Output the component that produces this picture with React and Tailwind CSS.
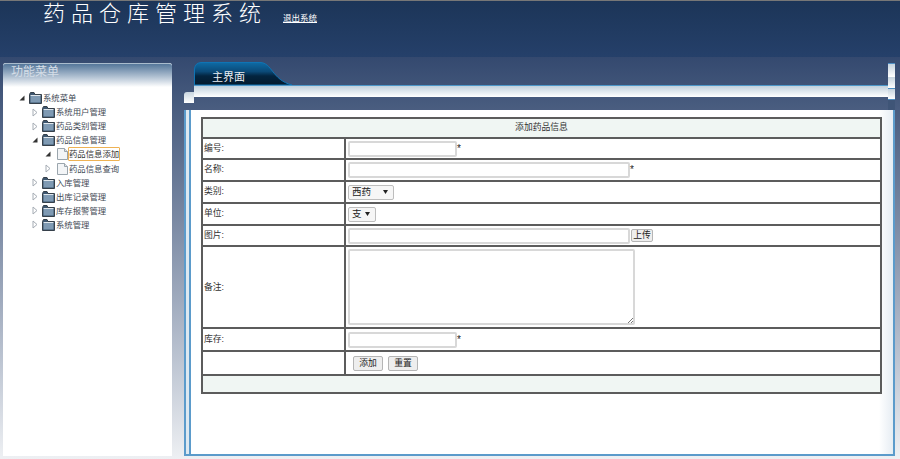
const FONT = 'font-["Liberation_Sans","Noto_Sans_CJK_SC",sans-serif]';

const TREE = [
  { label: '系统菜单', depth: 0, open: true, folder: true },
  { label: '系统用户管理', depth: 1, folder: true },
  { label: '药品类别管理', depth: 1, folder: true },
  { label: '药品信息管理', depth: 1, open: true, folder: true },
  { label: '药品信息添加', depth: 2, open: true, active: true },
  { label: '药品信息查询', depth: 2 },
  { label: '入库管理', depth: 1, folder: true },
  { label: '出库记录管理', depth: 1, folder: true },
  { label: '库存报警管理', depth: 1, folder: true },
  { label: '系统管理', depth: 1, folder: true },
];

function Arrow({ open }) {
  return open ? (
    <svg width="6" height="6" viewBox="0 0 6 6" className="shrink-0">
      <path d="M5.5.5V5.5H.5Z" fill="#333" />
    </svg>
  ) : (
    <svg width="6" height="9" viewBox="0 0 6 9" className="shrink-0">
      <path d="M1 1 5 4.5 1 8Z" fill="#fff" stroke="#a5acb4" />
    </svg>
  );
}

function Folder() {
  return (
    <svg width="13" height="12" viewBox="0 0 13 12" className="shrink-0">
      <path d="M.5 2.5V11.5H12.5V2.5H6L5 .5H1.5Z" fill="#3d566f" stroke="#36404a" />
      <rect x="1.5" y="4" width="10" height="6.5" fill="#7f9ab3" />
      <rect x="1.5" y="3" width="10" height="1" fill="#dfe6ec" />
    </svg>
  );
}

function Page() {
  return (
    <svg width="11" height="12" viewBox="0 0 11 12" className="ml-[2px] shrink-0">
      <path d="M.5.5H7.5L10.5 3.5V11.5H.5Z" fill="#f3f5f7" stroke="#9aa5ad" />
      <path d="M7.5 .5V3.5H10.5" fill="#dfe4e8" stroke="#9aa5ad" />
    </svg>
  );
}

function TreeRow({ item }) {
  const pad = { 0: 'pl-[16px]', 1: 'pl-[29px]', 2: 'pl-[42px]' }[item.depth];
  return (
    <div className={`flex h-[14.1px] items-center ${pad}`}>
      <span className="flex w-[10px] shrink-0 items-center">
        <Arrow open={item.open} />
      </span>
      {item.folder ? <Folder /> : <Page />}
      <span
        className={`whitespace-nowrap text-[8.4px] leading-[12px] text-[#3f4a55] ${
          item.active ? 'rounded-[1px] border border-[#eeb254] text-[#333]' : 'border border-transparent'
        }`}
      >
        {item.label}
      </span>
    </div>
  );
}

function Sidebar() {
  return (
    <div className="ml-[3px] mt-[6px] flex h-[393px] w-[169px] shrink-0 flex-col rounded-t-[3px] bg-white">
      <div className="h-[24px] rounded-t-[3px] border-t border-[#a9bccd] bg-gradient-to-b from-[#55779a] to-white pl-[8px] text-[12px] leading-[17px] text-[#d5dee7]">
        功能菜单
      </div>
      <div className="pt-[4px]">
        {TREE.map(item => (
          <TreeRow key={item.label} item={item} />
        ))}
      </div>
    </div>
  );
}

const inputCls = 'block h-[16px] rounded-[2px] border-2 border-[#d8d8d8] bg-white';
const labelCls = 'border-2 border-[#5c5c5c] pl-[1px] text-[8.8px] text-[#333]';
const valueCls = 'border-2 border-[#5c5c5c] pl-[2px] text-[8.8px] text-[#333]';

function Star() {
  return <span className="text-[10px] leading-[16px] text-[#222]">*</span>;
}

function FakeSelect({ label, width }) {
  return (
    <div className={`flex h-[15px] items-center justify-between rounded-[2px] border border-[#bdbdbd] bg-[#f6f6f6] pl-[3px] pr-[5px] text-[9.5px] leading-none text-[#222] ${width}`}>
      <span>{label}</span>
      <svg width="5" height="4" viewBox="0 0 5 4">
        <path d="M0 0H5L2.5 4Z" fill="#222" />
      </svg>
    </div>
  );
}

function Btn({ children, cls }) {
  return (
    <button className={`rounded-[2px] border border-[#b5b5b5] bg-[#eeeeee] text-[8.8px] leading-none text-[#222] ${cls}`}>
      {children}
    </button>
  );
}

function FormTable() {
  return (
    <table className="w-[681px] table-fixed border-collapse">
      <colgroup>
        <col className="w-[143px]" />
        <col />
      </colgroup>
      <tbody>
        <tr className="h-[20px]">
          <td colSpan={2} className="border-2 border-[#5c5c5c] bg-[#f0f6f3] text-center text-[8.8px] text-[#333]">添加药品信息</td>
        </tr>
        <tr className="h-[21px]">
          <td className={labelCls}>编号:</td>
          <td className={valueCls}><div className="flex"><div className={`${inputCls} w-[109px]`} /><Star /></div></td>
        </tr>
        <tr className="h-[22px]">
          <td className={labelCls}>名称:</td>
          <td className={valueCls}><div className="flex"><div className={`${inputCls} w-[282px]`} /><Star /></div></td>
        </tr>
        <tr className="h-[22px]">
          <td className={labelCls}>类别:</td>
          <td className={valueCls}><FakeSelect label="西药" width="w-[46px]" /></td>
        </tr>
        <tr className="h-[22px]">
          <td className={labelCls}>单位:</td>
          <td className={valueCls}><FakeSelect label="支" width="w-[28px]" /></td>
        </tr>
        <tr className="h-[21px]">
          <td className={labelCls}>图片:</td>
          <td className={valueCls}>
            <div className="flex items-center">
              <div className={`${inputCls} w-[282px]`} />
              <Btn cls="ml-[1px] h-[13px] w-[22px]">上传</Btn>
            </div>
          </td>
        </tr>
        <tr className="h-[82px]">
          <td className={labelCls}><span className="relative top-[1px]">备注:</span></td>
          <td className={valueCls}>
            <div className="relative h-[76px] w-[287px] rounded-[2px] border-2 border-[#d8d8d8] bg-white">
              <svg width="6" height="6" viewBox="0 0 6 6" className="absolute bottom-0 right-0">
                <path d="M1 6 6 1M4 6 6 4" stroke="#777" />
              </svg>
            </div>
          </td>
        </tr>
        <tr className="h-[23px]">
          <td className={labelCls}>库存:</td>
          <td className={valueCls}><div className="flex"><div className={`${inputCls} w-[109px]`} /><Star /></div></td>
        </tr>
        <tr className="h-[24px]">
          <td className={labelCls} />
          <td className={valueCls}>
            <div className="flex gap-[5px] pl-[5px]">
              <Btn cls="h-[15px] w-[30px]">添加</Btn>
              <Btn cls="h-[15px] w-[30px]">重置</Btn>
            </div>
          </td>
        </tr>
        <tr className="h-[18px]">
          <td colSpan={2} className="border-2 border-[#5c5c5c] bg-[#f0f6f3]" />
        </tr>
      </tbody>
    </table>
  );
}

function Strip() {
  return (
    <div className="flex w-[7px] shrink-0 flex-col pt-[1px]">
      <div className="h-[14px] border-t border-[#4d8fc4] bg-gradient-to-b from-[#c5d3de] to-white" />
      <div className="h-[11px] bg-gradient-to-b from-[#c5d3de] to-white" />
      <div className="h-[11px] border-t border-[#4d8fc4] bg-gradient-to-b from-[#c5d3de] to-white" />
      <div className="h-[11px] border-t border-[#4d8fc4] bg-[#3f5577]" />
    </div>
  );
}

function Main() {
  return (
    <div className="ml-[12px] mt-[5px] flex w-[711px] shrink-0 flex-col">
      <div className="flex h-[48px]">
        <div className="flex w-[10px] shrink-0 flex-col pt-[30px]">
          <div className="h-[11px] rounded-tl-[3px] bg-gradient-to-b from-[#c9d6e0] to-white" />
        </div>
        <div className="flex w-[694px] shrink-0 flex-col">
          <div className="relative h-[23px] w-[100px]">
            <svg width="100" height="23" viewBox="0 0 100 23" className="absolute inset-0">
              <defs>
                <linearGradient id="tab" x1="0" y1="0" x2="0" y2="1">
                  <stop offset="0" stopColor="#0e6ba5" />
                  <stop offset="0.4" stopColor="#0b4a78" />
                  <stop offset="0.6" stopColor="#03243f" />
                  <stop offset="1" stopColor="#041a2d" />
                </linearGradient>
              </defs>
              <path d="M.5 23V8Q.5 1 7 .5H66C78 .5 78 18 98 23Z" fill="url(#tab)" stroke="#0f74b4" />
            </svg>
            <span className="absolute left-[18px] top-[8px] text-[11px] leading-[15px] text-[#e8eef3]">主界面</span>
          </div>
          <div className="h-[12px] border-t border-[#4d97c9] bg-gradient-to-b from-[#c2d1dd] to-white" />
        </div>
        <Strip />
      </div>
      <div className="flex h-[346px] border-b-2 border-r-2 border-[#5b9bcb] bg-white">
        <div className="w-[7px] shrink-0 border-x-2 border-[#5b9bcb] bg-[#dde8f0]" />
        <div className="flex-1 bg-gradient-to-r from-white from-[98%] to-[#e6edf3] pl-[10px] pt-[7px]">
          <FormTable />
        </div>
      </div>
    </div>
  );
}

export default function App() {
  return (
    <div className={`h-[459px] w-[900px] overflow-hidden ${FONT}`}>
      <header className="flex h-[57px] items-start border-t border-[#777] bg-gradient-to-b from-[#1c3558] to-[#25406a]">
        <h1 className="ml-[43px] mt-[1px] text-[22px] font-light leading-[24px] tracking-[6px] text-white">药品仓库管理系统</h1>
        <a className="ml-[16px] mt-[11px] text-[8.5px] leading-[12px] text-white underline">退出系统</a>
      </header>
      <div className="flex h-[402px] bg-gradient-to-b from-[#34496f] to-[#eef0f3]">
        <Sidebar />
        <Main />
      </div>
    </div>
  );
}
